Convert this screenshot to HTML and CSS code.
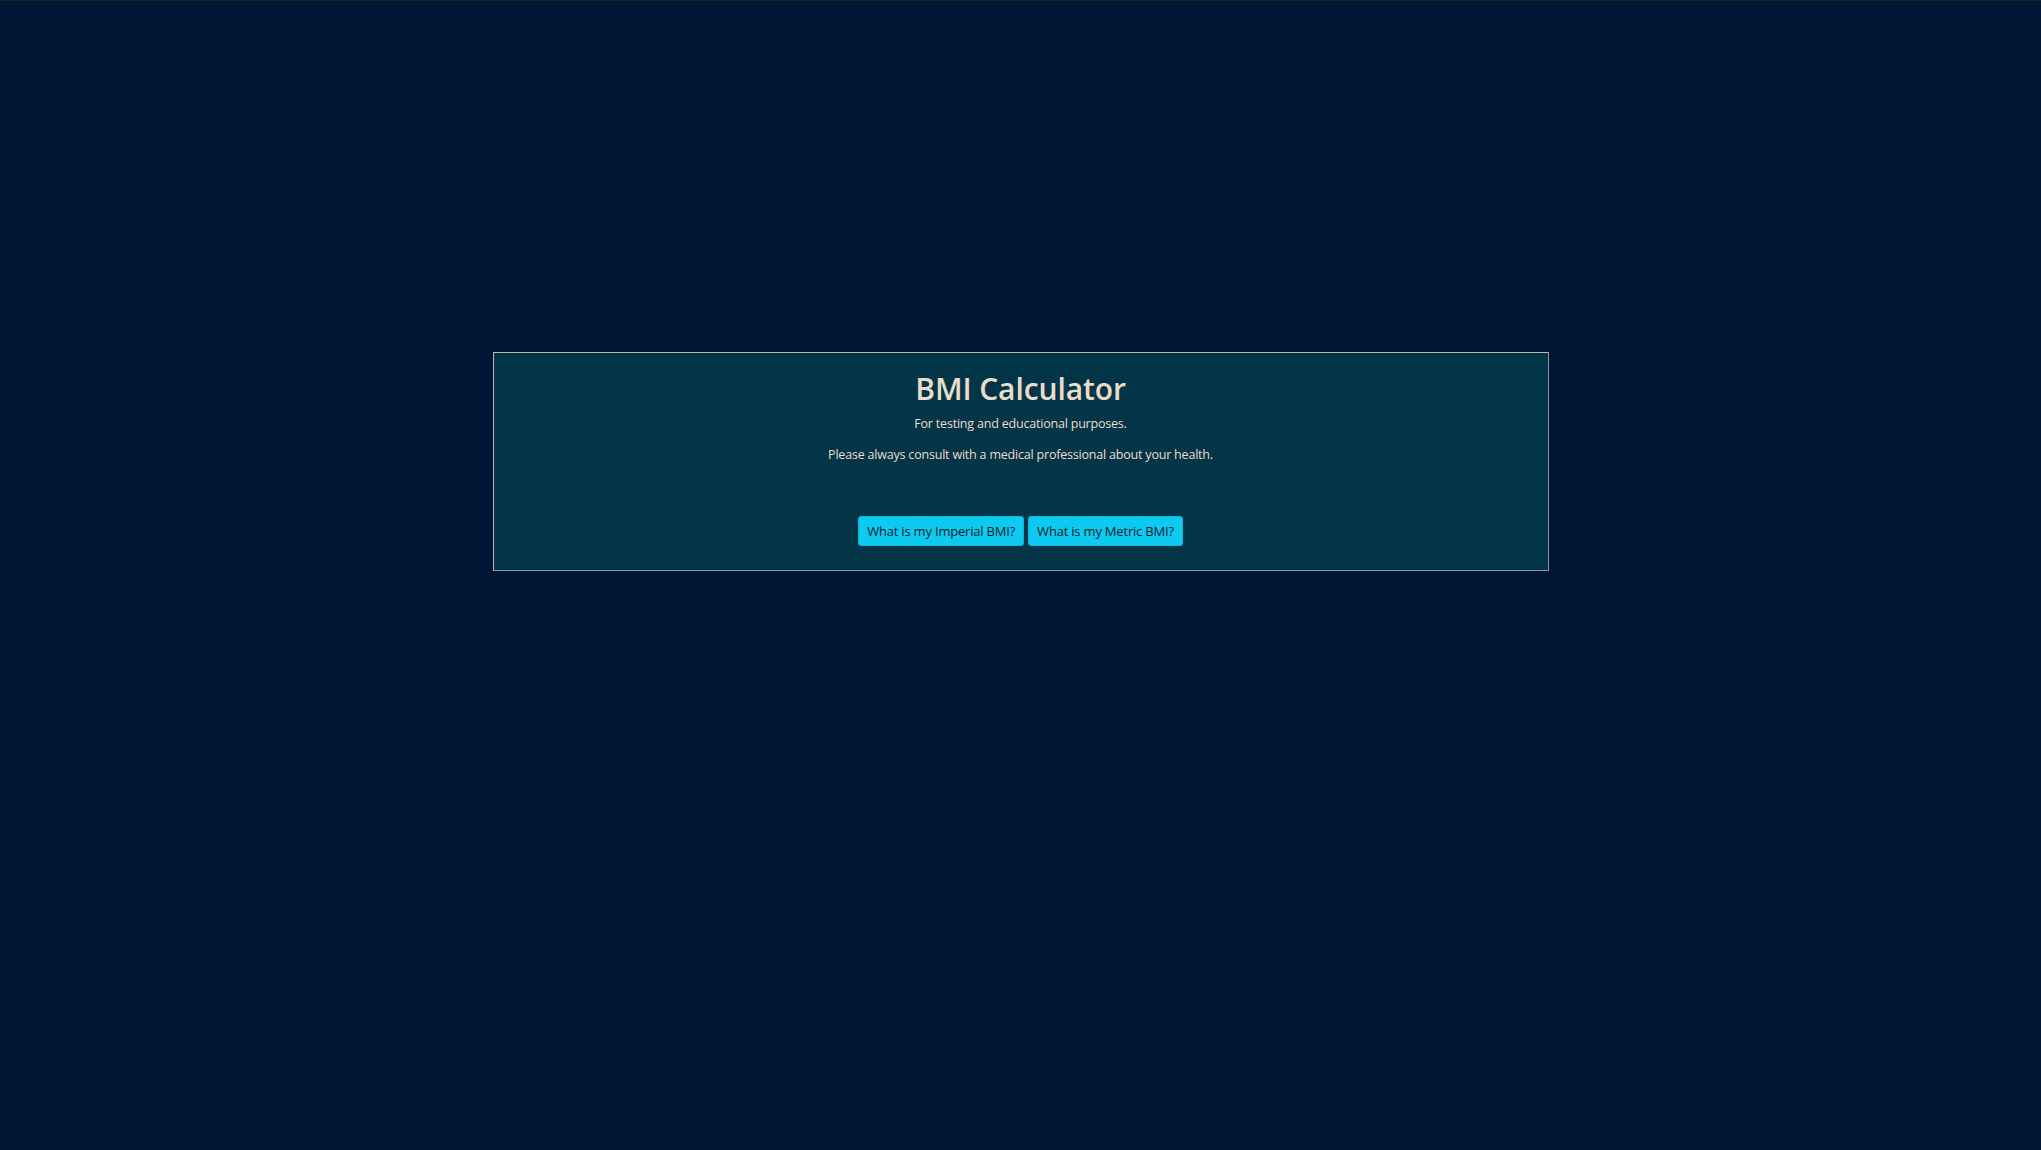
FILE: index.html
```html
<!DOCTYPE html>
<html lang="en">
<head>
<meta charset="utf-8">
<title>BMI Calculator</title>
<link rel="stylesheet" href="styles.css">
</head>
<body>
<div class="topline"></div>
<main class="card">
  <h1 class="title">BMI Calculator</h1>
  <p class="note">For testing and educational purposes.</p>
  <p class="note note-second">Please always consult with a medical professional about your health.</p>
  <div class="actions">
    <button class="btn" type="button">What is my Imperial BMI?</button>
    <button class="btn" type="button">What is my Metric BMI?</button>
  </div>
</main>
</body>
</html>
```

FILE: styles.css
```css
html, body {
  margin: 0;
  padding: 0;
}

body {
  background: #011634;
  font-family: "Open Sans", "Noto Sans", sans-serif;
  color: #ecdcc8;
  min-height: 1150px;
}

.topline {
  height: 1px;
  background: #1f2226;
}

.card {
  box-sizing: border-box;
  width: 1056px;
  margin: 351px auto 0;
  padding: 17px 16px 24px;
  background: #033549;
  border-width: 1px;
  border-style: solid;
  border-color: #bdb8ae #8a9899 #8a9899 #bdb8ae;
  text-align: center;
}

.title {
  margin: 0;
  font-size: 30px;
  line-height: 38px;
  font-weight: 600;
  color: #eadcc8;
  letter-spacing: -0.1px;
}

.note {
  margin: 5px 0 0;
  font-size: 12.5px;
  line-height: 21px;
  letter-spacing: -0.2px;
}

.note-second {
  margin-top: 10px;
}

.actions {
  display: flex;
  justify-content: center;
  gap: 4px;
  margin-top: 51px;
}

.btn {
  font-family: inherit;
  font-size: 13px;
  letter-spacing: -0.2px;
  line-height: 20px;
  padding: 4px 8px;
  background: #0dcaf0;
  color: #061c2a;
  border: 1px solid #0bb8da;
  border-radius: 3px;
  cursor: pointer;
}
```
